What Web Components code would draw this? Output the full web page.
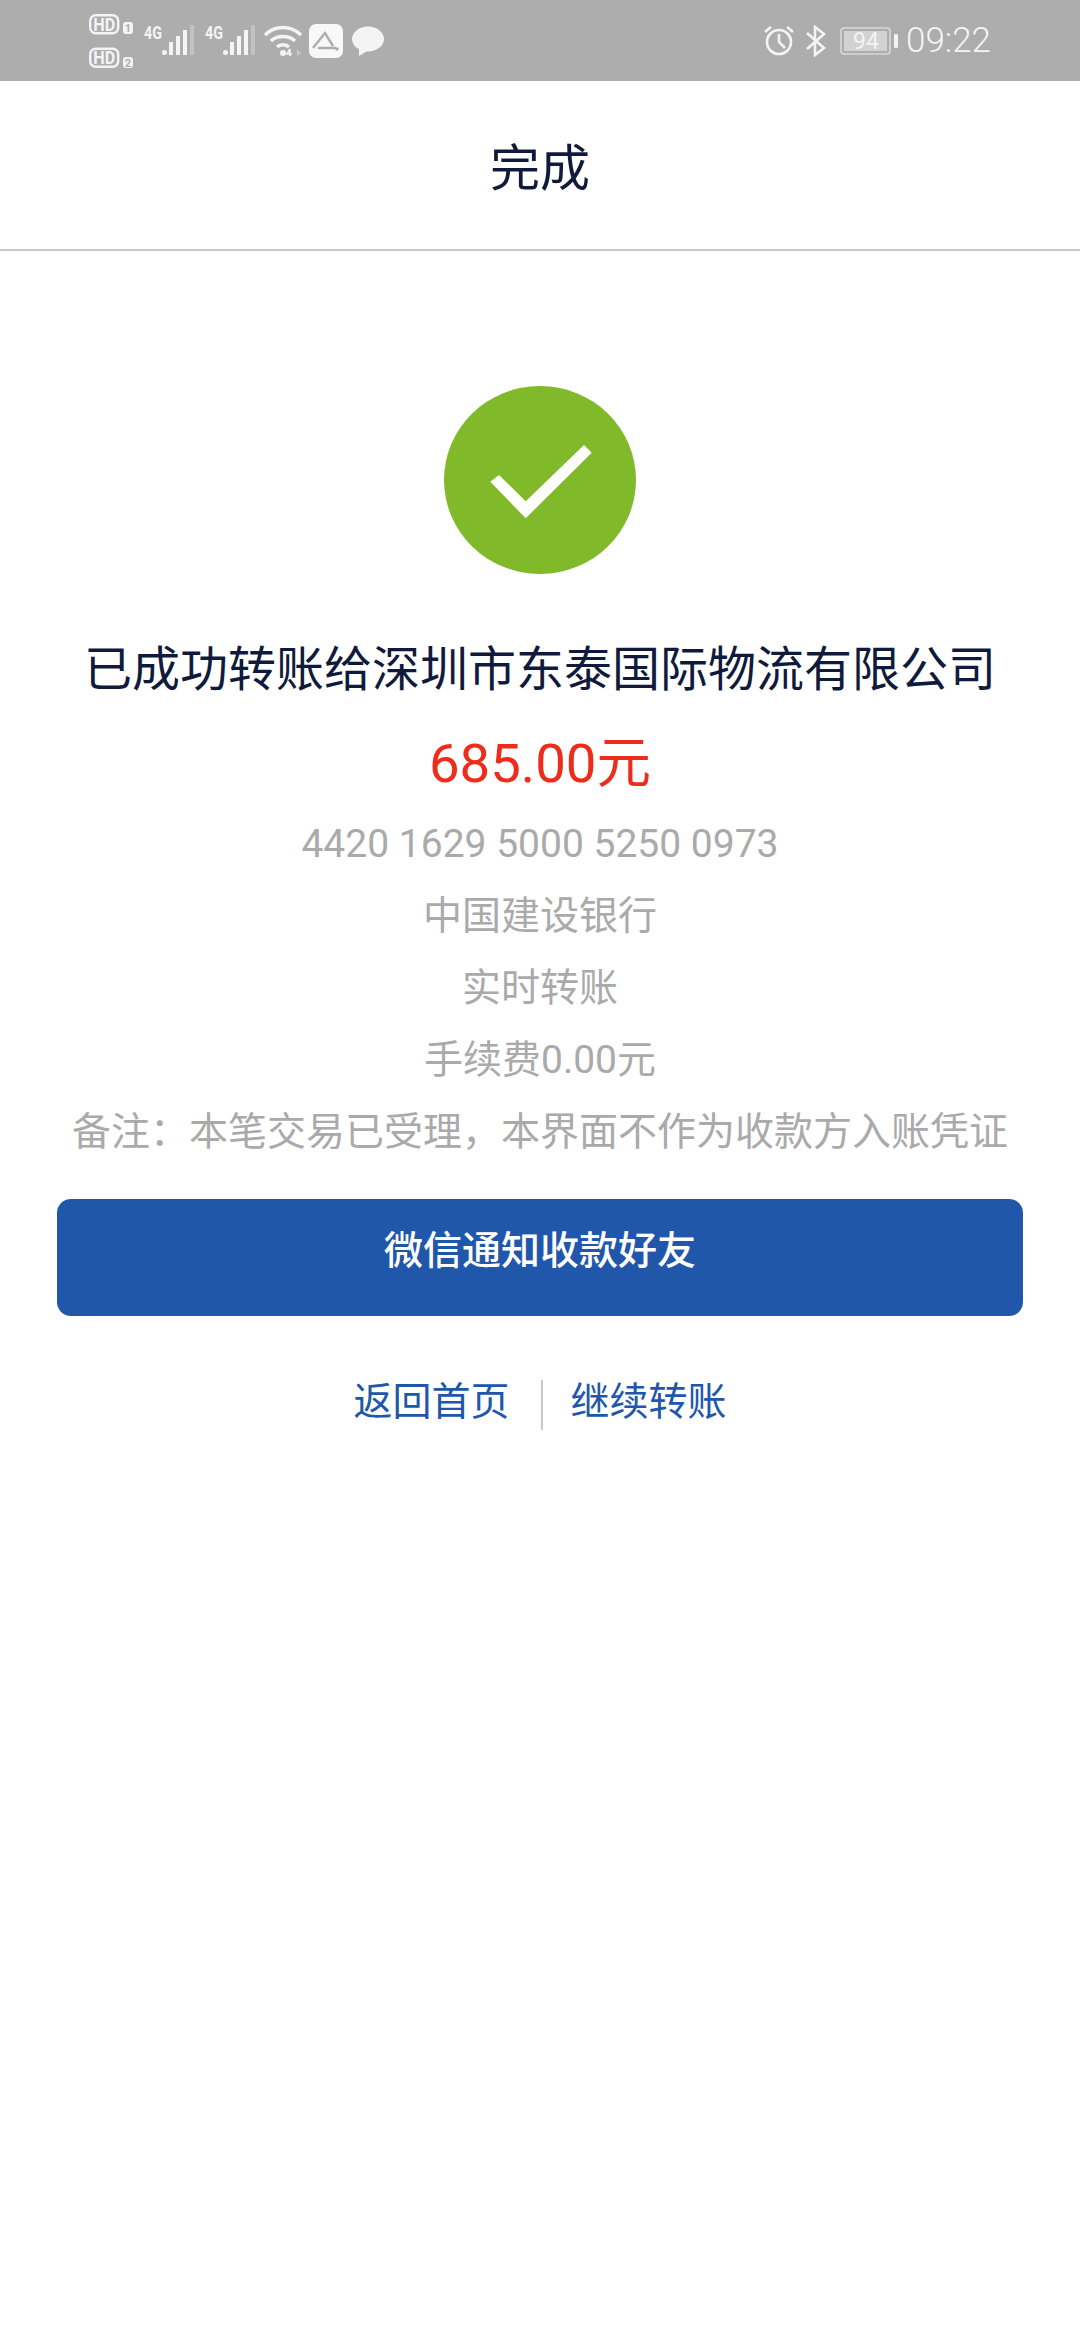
<!DOCTYPE html>
<html lang="zh-CN">
<head>
<meta charset="utf-8">
<title>完成</title>
<style>
	html, body { margin: 0; padding: 0; background: #fff; }
	body { width: 1080px; height: 2340px; overflow: hidden; font-family: Roboto, "Noto Sans CJK SC", sans-serif; }
</style>
</head>
<body>
<status-bar></status-bar>
<app-header>完成</app-header>
<transfer-result
	payee="已成功转账给深圳市东泰国际物流有限公司"
	amount="685.00元">
	<detail-line>4420 1629 5000 5250 0973</detail-line>
	<detail-line>中国建设银行</detail-line>
	<detail-line>实时转账</detail-line>
	<detail-line>手续费0.00元</detail-line>
	<detail-line>备注&#xFF1A;本笔交易已受理&#xFF0C;本界面不作为收款方入账凭证</detail-line>
</transfer-result>
<primary-button>微信通知收款好友</primary-button>
<link-row>
	<span>返回首页</span>
	<span>继续转账</span>
</link-row>

<script>
class StatusBar extends HTMLElement {
	constructor() {
		super();
		const shadowRoot = this.attachShadow({ mode: 'open' });
		shadowRoot.innerHTML = `
			<style>
				:host {
					align-items: center;
					background: #adadad;
					box-sizing: border-box;
					color: #f4f4f4;
					display: flex;
					font-family: Roboto, sans-serif;
					height: 81px;
					justify-content: space-between;
					padding: 0 89px;
				}
				.side { align-items: center; display: flex; }
				svg { display: block; flex: none; }
				.sims { margin-right: 9px; }
				.net { margin-right: 9px; }
				.wifi { margin-left: -2px; margin-right: 7px; }
				.app { margin-right: 9px; }
				.alarm { margin-right: 12px; }
				.bt { margin-right: 14px; }
				.battery { margin-right: 8px; }
				.time { font-size: 35px; font-weight: 300; line-height: 81px; }
			</style>
			<div class="side">
				<svg class="sims" width="46" height="66" viewBox="0 -6 46 66">
					<rect x="1.200" y="1.200" width="28" height="18" rx="5.500" fill="none" stroke="#f4f4f4" stroke-width="2.400"/>
					<text x="15.200" y="16.500" text-anchor="middle" font-family="Roboto" font-weight="700" font-size="18" textLength="22" lengthAdjust="spacingAndGlyphs" fill="#f4f4f4">HD</text>
					<rect x="34" y="8" width="10" height="12" rx="3" fill="#f4f4f4"/>
					<text x="39" y="18" text-anchor="middle" font-family="Roboto" font-weight="700" font-size="11" fill="#adadad">1</text>
					<rect x="1.200" y="34.800" width="28" height="18" rx="5.500" fill="none" stroke="#f4f4f4" stroke-width="2.400"/>
					<text x="15.200" y="50" text-anchor="middle" font-family="Roboto" font-weight="700" font-size="18" textLength="22" lengthAdjust="spacingAndGlyphs" fill="#f4f4f4">HD</text>
					<rect x="34" y="43" width="10" height="11" rx="3" fill="#f4f4f4"/>
					<text x="39" y="52.500" text-anchor="middle" font-family="Roboto" font-weight="700" font-size="11" fill="#adadad">2</text>
				</svg>
				${this.network()}
				${this.network()}
				<svg class="wifi" width="38" height="32" viewBox="0 0 38 32" fill="none" stroke="#f4f4f4" stroke-width="3.400">
					<path d="M1 10 C11 0 27 0 37 10"/>
					<path d="M7 16 C13 10 25 10 31 16"/>
					<path d="M13 22 C16 19 22 19 25 22"/>
					<circle cx="19" cy="28" r="3" fill="#f4f4f4" stroke="none"/>
					<path d="M26 31 L26 24 M26 24 L23 29 L28 29" stroke-width="1.600"/>
					<path d="M33 24 L37 28 L33 31 Z" fill="#c9c9c9" stroke="none"/>
				</svg>
				<svg class="app" width="34" height="34" viewBox="0 0 34 34">
					<rect width="34" height="34" rx="7" fill="#f8f8f8"/>
					<path d="M4 24 L16 9 L24 22 M9 24 H27" fill="none" stroke="#adadad" stroke-width="2.400"/>
					<circle cx="28" cy="25" r="1.800" fill="#adadad"/>
				</svg>
				<svg width="32" height="30" viewBox="0 0 32 30">
					<ellipse cx="16" cy="13" rx="16" ry="12.500" fill="#f4f4f4"/>
					<path d="M7 20 L7 30 L17 24 Z" fill="#f4f4f4"/>
				</svg>
			</div>
			<div class="side">
				<svg class="alarm" width="30" height="31" viewBox="0 0 30 31" fill="none" stroke="#f4f4f4" stroke-width="2.600">
					<circle cx="15" cy="17" r="12"/>
					<path d="M15 9 V17 L21 23"/>
					<path d="M1 7 L7 2 M23 2 L29 7"/>
				</svg>
				<svg class="bt" width="20" height="32" viewBox="0 0 20 32" fill="none" stroke="#f4f4f4" stroke-width="2.600">
					<path d="M1 8 L18 23 L9 30 V2 L18 9 L1 24"/>
				</svg>
				<svg class="battery" width="58" height="28" viewBox="0 0 58 28">
					<rect x="1" y="1" width="49" height="26" rx="3" fill="none" stroke="#d8d8d8" stroke-width="1.600"/>
					<rect x="4" y="4" width="43" height="20" fill="#d2d2d2"/>
					<rect x="54" y="7" width="4" height="14" rx="1.500" fill="#f4f4f4"/>
					<text x="26" y="22" text-anchor="middle" font-family="Roboto" font-size="23" fill="#f4f4f4">94</text>
				</svg>
				<span class="time">09:22</span>
			</div>
		`;
	}

	network() {
		return `
			<svg class="net" width="52" height="48" viewBox="0 -8 52 48">
				<text x="0" y="14" font-family="Roboto" font-weight="700" font-size="18" fill="#f4f4f4" textLength="18" lengthAdjust="spacingAndGlyphs">4G</text>
				<rect x="18" y="25" width="5" height="5" rx="2.500" fill="#f4f4f4"/>
				<rect x="25" y="17" width="4" height="13" fill="#f4f4f4"/>
				<rect x="32" y="11" width="4" height="19" fill="#f4f4f4"/>
				<rect x="39" y="5" width="4" height="25" fill="#f4f4f4"/>
				<rect x="46" y="0" width="4" height="30" fill="#c2c2c2"/>
			</svg>`;
	}
}

class AppHeader extends HTMLElement {
	constructor() {
		super();
		const shadowRoot = this.attachShadow({ mode: 'open' });
		shadowRoot.innerHTML = `
			<style>
				:host {
					align-items: center;
					background: #fff;
					border-bottom: 2px solid #c8c8c8;
					box-sizing: border-box;
					color: #101a3c;
					display: flex;
					font-size: 50px;
					height: 170px;
					justify-content: center;
					padding-bottom: 3px;
				}
			</style>
			<slot></slot>
		`;
	}
}

class TransferResult extends HTMLElement {
	constructor() {
		super();
		const shadowRoot = this.attachShadow({ mode: 'open' });
		shadowRoot.innerHTML = `
			<style>
				:host {
					align-items: center;
					display: flex;
					flex-direction: column;
					padding-top: 135px;
				}
				svg { display: block; }
				.payee {
					color: #101a3c;
					font-size: 48px;
					line-height: 60px;
					margin-top: 66px;
					white-space: nowrap;
				}
				.amount {
					color: #ee2c1c;
					font-size: 54.500px;
					line-height: 70px;
					margin-top: 28px;
				}
				.details {
					display: flex;
					flex-direction: column;
					align-items: center;
					margin-top: 10px;
				}
			</style>
			<svg width="192" height="188" viewBox="0 0 192 188">
				<ellipse cx="96" cy="94" rx="96" ry="94" fill="#80b929"/>
				<polygon points="46.300,95.700 55,89 81.700,115.300 140,59 147.700,66.700 81.700,132.300" fill="#fff"/>
			</svg>
			<div class="payee">${this.getAttribute('payee')}</div>
			<div class="amount">${this.getAttribute('amount')}</div>
			<div class="details"><slot></slot></div>
		`;
	}
}

class DetailLine extends HTMLElement {
	constructor() {
		super();
		const shadowRoot = this.attachShadow({ mode: 'open' });
		shadowRoot.innerHTML = `
			<style>
				:host {
					color: #aaa;
					display: block;
					font-size: 39px;
					line-height: 72px;
					text-align: center;
					white-space: nowrap;
				}
			</style>
			<slot></slot>
		`;
	}
}

class PrimaryButton extends HTMLElement {
	constructor() {
		super();
		const shadowRoot = this.attachShadow({ mode: 'open' });
		shadowRoot.innerHTML = `
			<style>
				:host {
					align-items: center;
					background: #2157ab;
					border-radius: 14px;
					box-sizing: border-box;
					color: #fff;
					display: flex;
					font-size: 39px;
					font-weight: 500;
					height: 117px;
					justify-content: center;
					margin: 31px 57px 0;
					padding-bottom: 21px;
				}
			</style>
			<slot></slot>
		`;
	}
}

class LinkRow extends HTMLElement {
	constructor() {
		super();
		const shadowRoot = this.attachShadow({ mode: 'open' });
		shadowRoot.innerHTML = `
			<style>
				:host {
					color: #2157ab;
					display: flex;
					font-size: 39px;
					justify-content: center;
					margin-top: 64px;
				}
				::slotted(span) {
					line-height: 44px;
					padding: 0 31px 6px 28px;
				}
				::slotted(span:first-child) {
					border-right: 2px solid #c8c8c8;
					padding-left: 31px;
				}
			</style>
			<slot></slot>
		`;
	}
}

customElements.define('status-bar', StatusBar);
customElements.define('app-header', AppHeader);
customElements.define('transfer-result', TransferResult);
customElements.define('detail-line', DetailLine);
customElements.define('primary-button', PrimaryButton);
customElements.define('link-row', LinkRow);
</script>
</body>
</html>
